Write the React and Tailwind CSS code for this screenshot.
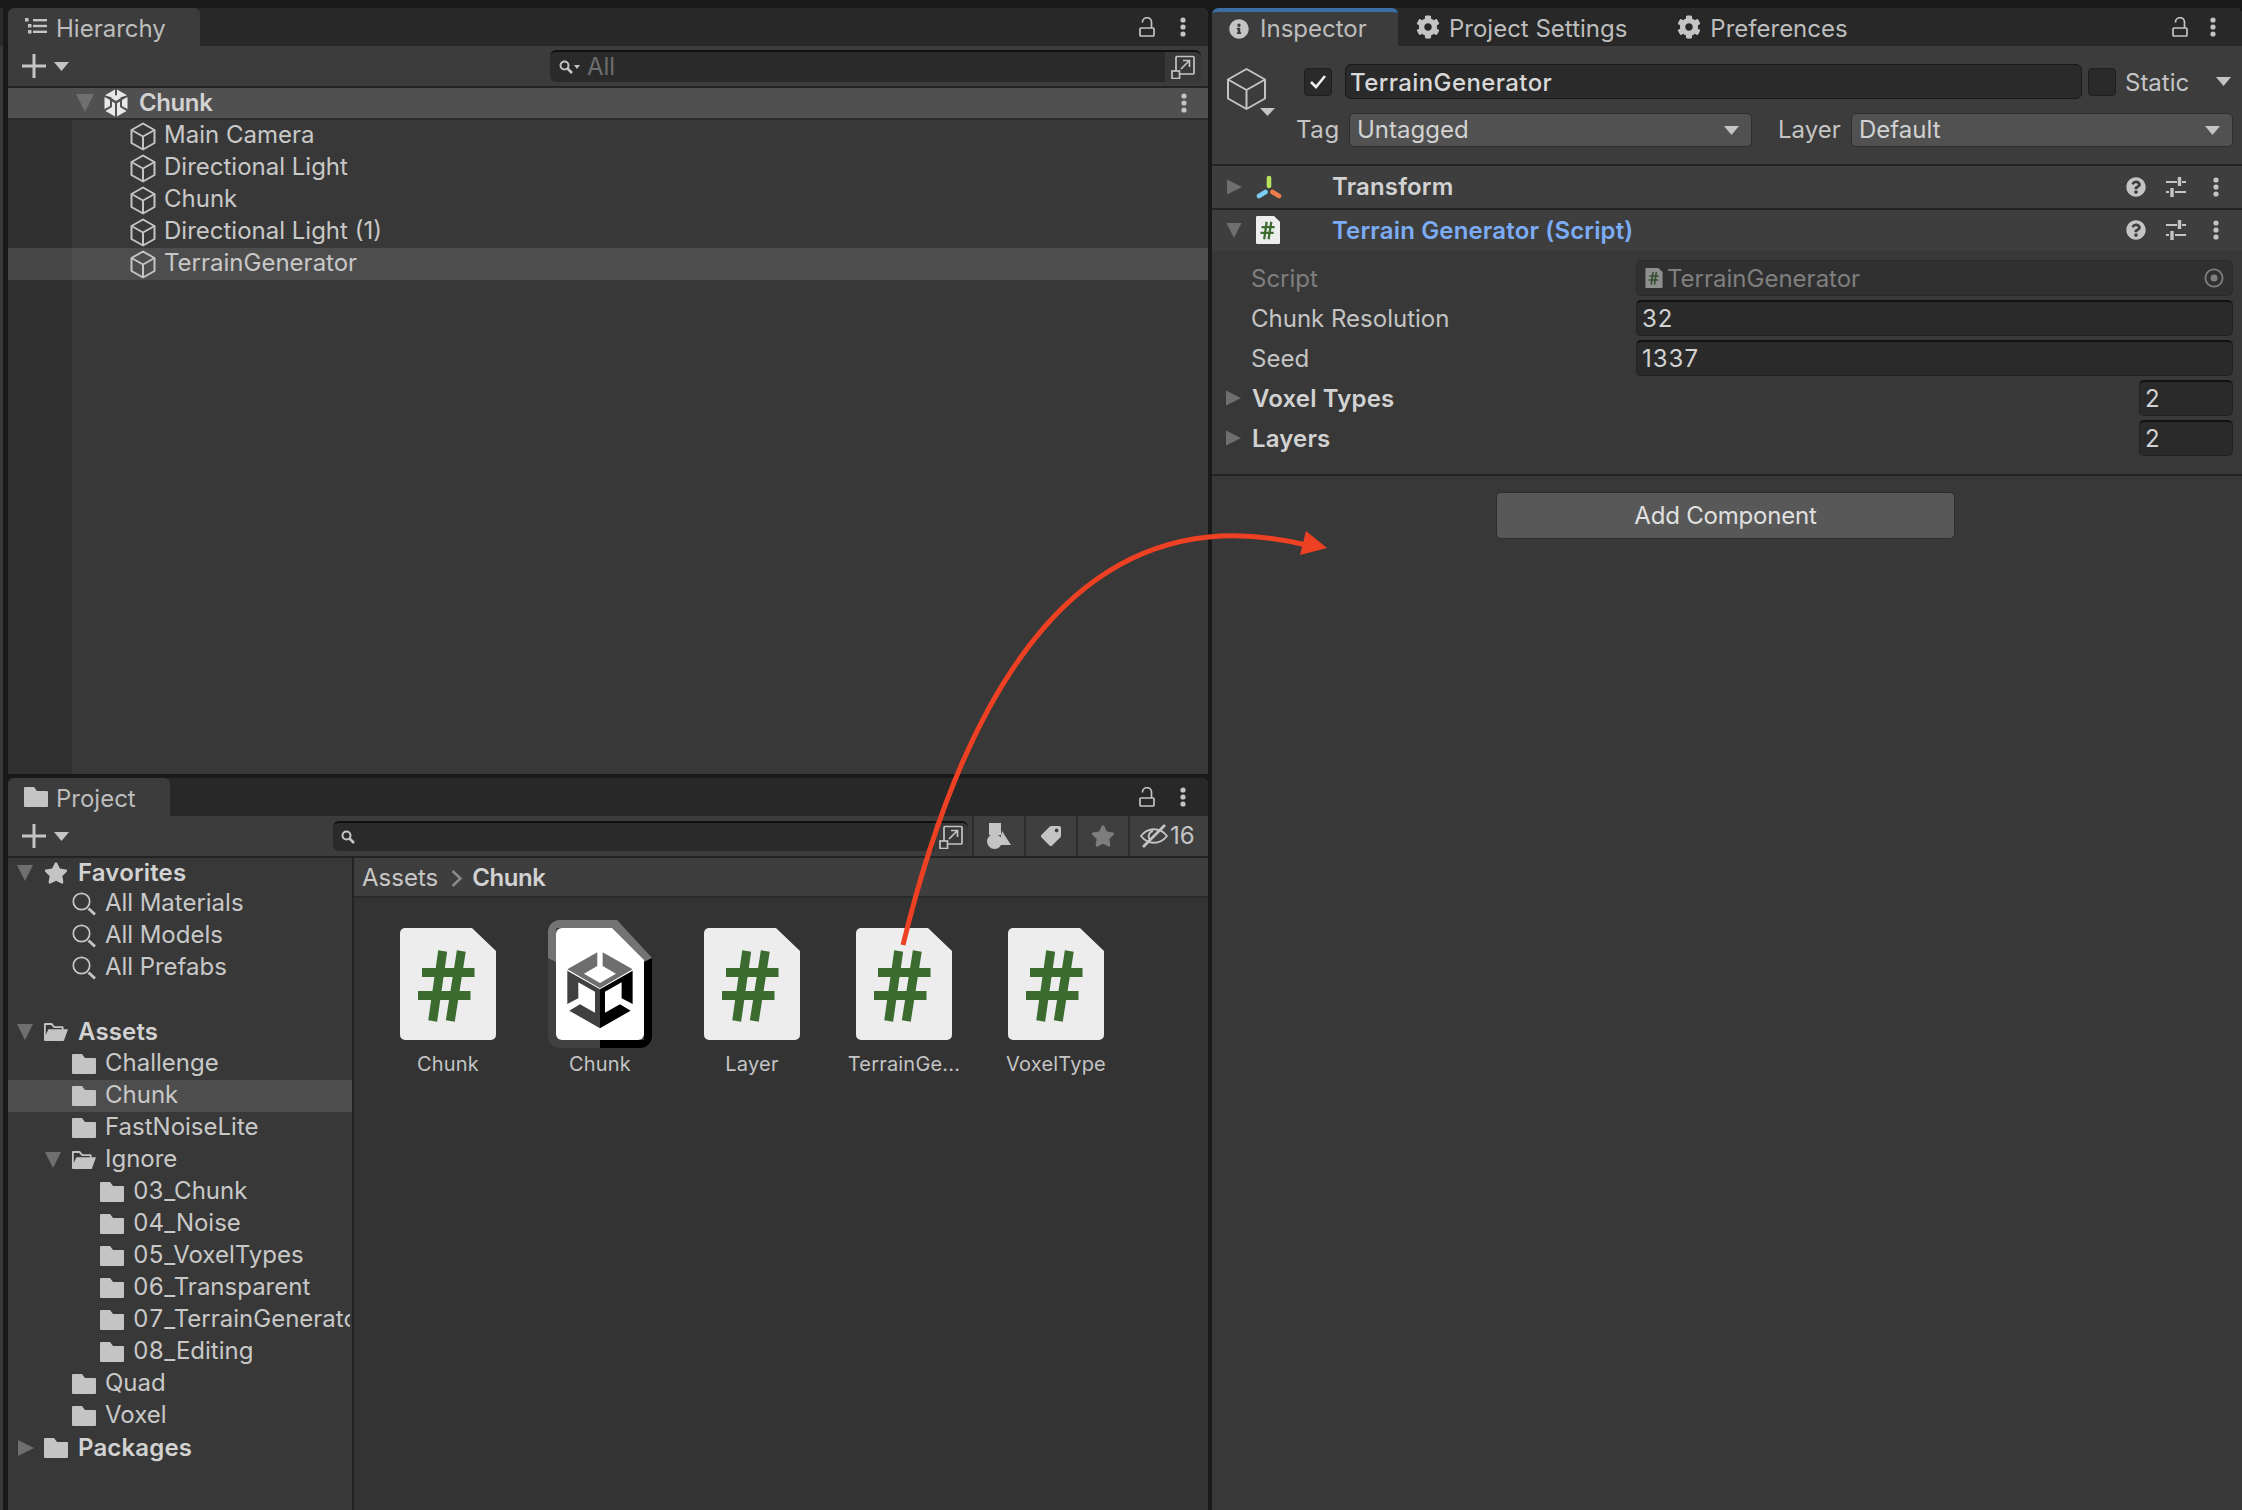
import { FaCog, FaInfoCircle, FaQuestionCircle, FaStar, FaTag } from "react-icons/fa"

const hierarchyRows = ["Main Camera", "Directional Light", "Chunk", "Directional Light (1)", "TerrainGenerator"]

const treeRows = [
  { name: "Favorites", icon: "star", bold: true, arrow: "down", pad: "pl-[8px]" },
  { name: "All Materials", icon: "search", pad: "pl-[36px]" },
  { name: "All Models", icon: "search", pad: "pl-[36px]" },
  { name: "All Prefabs", icon: "search", pad: "pl-[36px]" },
  { name: "", pad: "" },
  { name: "Assets", icon: "open", bold: true, arrow: "down", pad: "pl-[8px]" },
  { name: "Challenge", icon: "folder", pad: "pl-[36px]" },
  { name: "Chunk", icon: "folder", pad: "pl-[36px]", selected: true },
  { name: "FastNoiseLite", icon: "folder", pad: "pl-[36px]" },
  { name: "Ignore", icon: "open", arrow: "down", pad: "pl-[36px]" },
  { name: "03_Chunk", icon: "folder", pad: "pl-[64px]" },
  { name: "04_Noise", icon: "folder", pad: "pl-[64px]" },
  { name: "05_VoxelTypes", icon: "folder", pad: "pl-[64px]" },
  { name: "06_Transparent", icon: "folder", pad: "pl-[64px]" },
  { name: "07_TerrainGenerator", icon: "folder", pad: "pl-[64px]" },
  { name: "08_Editing", icon: "folder", pad: "pl-[64px]" },
  { name: "Quad", icon: "folder", pad: "pl-[36px]" },
  { name: "Voxel", icon: "folder", pad: "pl-[36px]" },
  { name: "Packages", icon: "folder", bold: true, arrow: "right", pad: "pl-[8px]" },
]

const assets = [
  { name: "Chunk", type: "script" },
  { name: "Chunk", type: "prefab" },
  { name: "Layer", type: "script" },
  { name: "TerrainGe...", type: "script" },
  { name: "VoxelType", type: "script" },
]

function TriDown({ className = "", color = "#6f6f6f" }) {
  return (
    <svg viewBox="0 0 18 18" className={className}>
      <path d="M0 0H18L9 18Z" fill={color} />
    </svg>
  )
}

function TriRight({ className = "" }) {
  return (
    <svg viewBox="0 0 18 18" className={className}>
      <path d="M0 0L18 9L0 18Z" fill="#6f6f6f" />
    </svg>
  )
}

function MiniArrow({ className = "" }) {
  return (
    <svg viewBox="0 0 15 9" className={className}>
      <path d="M0 0H15L7.5 9Z" fill="#c4c4c4" />
    </svg>
  )
}

function Dots({ className = "" }) {
  return (
    <svg viewBox="0 0 6 20" className={`w-[6px] h-[20px] shrink-0 ${className}`}>
      <circle cx="3" cy="3" r="2.6" fill="#c4c4c4" />
      <circle cx="3" cy="10" r="2.6" fill="#c4c4c4" />
      <circle cx="3" cy="17" r="2.6" fill="#c4c4c4" />
    </svg>
  )
}

function Lock({ className = "" }) {
  return (
    <svg viewBox="0 0 16 20" className={`w-[16px] h-[20px] shrink-0 ${className}`} fill="none" stroke="#c4c4c4" strokeWidth="1.7">
      <rect x="1" y="11" width="14" height="8" rx="1" />
      <path d="M3.5 5.5A4.5 4.5 0 0 1 12.5 4.8V11" />
    </svg>
  )
}

function Plus() {
  return (
    <svg viewBox="0 0 24 24" className="w-[24px] h-[24px] shrink-0">
      <path d="M10.5 0h3v10.5H24v3H13.5V24h-3V13.5H0v-3h10.5Z" fill="#c4c4c4" />
    </svg>
  )
}

function Cube({ className = "", stroke = "#c4c4c4", width = 2 }) {
  return (
    <svg viewBox="0 0 26 29" className={className} fill="none" stroke={stroke} strokeWidth={width} strokeLinejoin="round">
      <path d="M13 1.5L24.5 8V21L13 27.5L1.5 21V8Z" />
      <path d="M1.5 8L13 14.5L24.5 8M13 14.5V27.5" />
    </svg>
  )
}

function UnityMark({ className = "" }) {
  return (
    <svg viewBox="0 0 24 28" className={className}>
      <path d="M11 0.5L1 6.2L11 9.4ZM13 0.5L23 6.2L13 9.4ZM0.5 8L6 11V17L0.5 20ZM23.5 8L18 11V17L23.5 20Z" fill="#e8e8e8" />
      <path d="M8 12.5L11 14.2V27.5L1.5 22L8 18ZM16 12.5L13 14.2V27.5L22.5 22L16 18Z" fill="#e8e8e8" />
      <path d="M12 6L17 9L12 12L7 9Z" fill="#e8e8e8" />
    </svg>
  )
}

function Folder({ className = "" }) {
  return (
    <svg viewBox="0 0 24 20" className={className}>
      <path d="M1 0H10L13 4H23a1 1 0 0 1 1 1V19a1 1 0 0 1-1 1H1a1 1 0 0 1-1-1V1a1 1 0 0 1 1-1Z" fill="#c4c4c4" />
    </svg>
  )
}

function FolderOpen({ className = "" }) {
  return (
    <svg viewBox="0 0 27 20" className={className}>
      <path d="M1 0H9L12 3.5H21a1 1 0 0 1 1 1V7H20V5.5H11L8 2H2V13L5 7H27L22.5 19.5a1 1 0 0 1-1 .5H1a1 1 0 0 1-1-1V1a1 1 0 0 1 1-1Z" fill="#c4c4c4" />
    </svg>
  )
}

function SearchRing({ className = "" }) {
  return (
    <svg viewBox="0 0 24 24" className={className} fill="none" stroke="#c4c4c4">
      <circle cx="9.5" cy="9.5" r="8.2" strokeWidth="1.8" />
      <path d="M16.5 16.5L23 22.5" strokeWidth="3" />
    </svg>
  )
}

function SmallSearch({ className = "" }) {
  return (
    <svg viewBox="0 0 14 14" className={className} fill="none" stroke="#c4c4c4">
      <circle cx="5.5" cy="5.5" r="4" strokeWidth="2" />
      <path d="M8.5 8.5L13 13" strokeWidth="2.6" />
    </svg>
  )
}

function Expand({ className = "" }) {
  return (
    <svg viewBox="0 0 24 24" className={`w-[24px] h-[24px] shrink-0 ${className}`} fill="none" stroke="#c4c4c4" strokeWidth="1.7">
      <path d="M5 16V2.5a1 1 0 0 1 1-1H22a1 1 0 0 1 1 1V18a1 1 0 0 1-1 1H9" />
      <rect x="1" y="16" width="7.5" height="7.5" />
      <path d="M10 14L18 6M12 5.5H18.5V12" />
    </svg>
  )
}

function Sliders() {
  return (
    <svg viewBox="0 0 20 20" className="w-[20px] h-[20px] shrink-0" fill="none" stroke="#c4c4c4" strokeWidth="1.8">
      <path d="M0 5H11M16 5H20M0 15H3M9 15H20" />
      <path d="M13.5 0V9M6 11V20" strokeWidth="3.4" />
    </svg>
  )
}

function TransformIcon() {
  return (
    <svg viewBox="0 0 26 24" className="w-[26px] h-[24px] shrink-0" fill="none" strokeWidth="4.6" strokeLinecap="round">
      <path d="M13 3V11" stroke="#b6e25c" />
      <path d="M3 21L9.5 17" stroke="#7ccdf4" />
      <path d="M23 21L16.5 17" stroke="#ee7b4c" />
    </svg>
  )
}

function ScriptFile({ className = "" }) {
  return (
    <svg viewBox="0 0 96 112" className={className}>
      <path d="M5 0H72L96 23V107a5 5 0 0 1-5 5H5a5 5 0 0 1-5-5V5a5 5 0 0 1 5-5Z" fill="#ededed" />
      <path d="M42.7 23L32.7 93M61.3 23L50.3 93M22 44.5H74.5M18 67.5H70.5" fill="none" stroke="#3b6b2f" strokeWidth="9" />
    </svg>
  )
}

function PrefabFile() {
  return (
    <svg viewBox="0 0 104 128" className="w-[104px] h-[128px] shrink-0 -mt-2 -mx-1">
      <path d="M12 0H69L104 38V116a12 12 0 0 1-12 12H12a12 12 0 0 1-12-12V12A12 12 0 0 1 12 0Z" fill="#404040" />
      <path d="M12 0H69L104 38L96 42L64 8H8V42L0 38V12A12 12 0 0 1 12 0Z" fill="#737373" />
      <path d="M52 120H96V42L104 38V116a12 12 0 0 1-12 12H52Z" fill="#000" />
      <path d="M14 8H64L96 40V114a6 6 0 0 1-6 6H14a6 6 0 0 1-6-6V14a6 6 0 0 1 6-6Z" fill="#fff" />
      <g transform="translate(-188 -40) scale(0.3333)">
        <path d="M712 217L622 268L720 325L818 268L728 217V258L768 281L720 309L672 281L712 258Z" fill="#6e6e6e" />
        <path d="M622 272L720 328V445L628 392L660 373L705 398V335L655 307V355L622 372Z" fill="#404040" />
        <path d="M818 272L720 328V445L812 392L780 373L735 398V335L785 307V355L818 372Z" fill="#000" />
      </g>
    </svg>
  )
}

function ShapesIcon() {
  return (
    <svg viewBox="0 0 24 26" className="w-[24px] h-[26px] shrink-0" fill="#c4c4c4">
      <rect x="2" y="0" width="12" height="12" />
      <path d="M15 8L24 22H12Z" />
      <circle cx="7.5" cy="18.5" r="7.5" />
    </svg>
  )
}

function EyeOff() {
  return (
    <svg viewBox="0 0 28 24" className="w-[28px] h-[24px] shrink-0" fill="none" stroke="#c4c4c4" strokeWidth="1.8">
      <path d="M1 12C8 3 20 3 27 12C20 21 8 21 1 12Z" />
      <path d="M13 7a5.5 5.5 0 0 0-3 9" strokeWidth="1.8" />
      <path d="M3 23L25 1" strokeWidth="2.6" />
    </svg>
  )
}

function Tab({ icon, label, className = "", textClass = "pt-[3px]" }) {
  return (
    <div className={`flex items-center h-full ${className}`}>
      {icon}
      <span className={`text-[#bdbdbd] ${textClass}`}>{label}</span>
    </div>
  )
}

function Dropdown({ label, className = "" }) {
  return (
    <div className={`flex items-center justify-between h-[34px] rounded-[5px] bg-[#515151] border border-[#2e2e2e] pl-[7px] pr-[12px] text-[#d2d2d2] ${className}`}>
      <span>{label}</span>
      <MiniArrow className="w-[15px] h-[9px]" />
    </div>
  )
}

function ComponentHeader({ arrow, icon, label, labelColor, className = "" }) {
  return (
    <div className={`flex items-center bg-[#3e3e3e] pl-[15px] pr-[23px] ${className}`}>
      {arrow}
      <div className="w-[90px] pl-[14px] flex items-center">{icon}</div>
      <span className={`font-semibold tracking-[0.15px] ${labelColor}`}>{label}</span>
      <FaQuestionCircle className="ml-auto w-[20px] h-[20px] text-[#c4c4c4]" />
      <div className="ml-[20px]"><Sliders /></div>
      <Dots className="ml-[27px]" />
    </div>
  )
}

function Field({ value, className = "" }) {
  return (
    <div className={`h-[36px] flex items-center rounded-[5px] bg-[#2a2a2a] border border-[#212121] border-t-2 border-t-[#111111] pl-[5px] tracking-[1px] text-[#d2d2d2] ${className}`}>
      <span>{value}</span>
    </div>
  )
}

function Hierarchy() {
  return (
    <div className="h-[766px] flex flex-col rounded-t-md overflow-hidden bg-[#383838]">
      <div className="h-[38px] shrink-0 flex bg-[#282828]">
        <Tab
          className="w-[192px] bg-[#3c3c3c] rounded-t-md pl-[17px]"
          icon={
            <svg viewBox="0 0 22 16" className="w-[22px] h-[16px] mr-[9px] -mt-[2px]" fill="#c4c4c4">
              <rect x="0" y="0" width="3.5" height="3.5" />
              <rect x="3" y="6" width="3.5" height="3.5" />
              <rect x="3" y="12" width="3.5" height="3.5" />
              <rect x="8" y="1" width="14" height="2.4" />
              <rect x="8" y="6.8" width="14" height="2.4" />
              <rect x="8" y="12.6" width="14" height="2.4" />
            </svg>
          }
          label="Hierarchy"
        />
        <Lock className="ml-auto self-center" />
        <Dots className="ml-[25px] mr-[22px] self-center" />
      </div>
      <div className="h-[40px] shrink-0 flex items-center bg-[#3c3c3c] pl-[14px] pr-[7px]">
        <Plus />
        <MiniArrow className="w-[15px] h-[9px] ml-[8px]" />
        <div className="ml-[481px] flex-1 h-[32px] flex items-center rounded-md bg-[#2a2a2a] border-t-2 border-[#111111] pl-[9px]">
          <SmallSearch className="w-[14px] h-[14px]" />
          <div className="border-t-[4px] border-x-[3px] border-t-[#c4c4c4] border-x-transparent ml-[1px]" />
          <span className="ml-[7px] text-[#6d6d6d]">All</span>
          <div className="ml-auto h-full w-[36px] flex items-center justify-center bg-[#383838] rounded-r-md">
            <Expand />
          </div>
        </div>
      </div>
      <div className="h-[2px] shrink-0 bg-[#232323]" />
      <div className="h-[30px] shrink-0 flex items-center bg-[#505050] pl-[68px] pr-[21px]">
        <TriDown className="w-[18px] h-[18px]" />
        <UnityMark className="w-[24px] h-[28px] ml-[10px]" />
        <span className="ml-[11px] font-semibold tracking-[-0.4px] text-[#d2d2d2]">Chunk</span>
        <Dots className="ml-auto" />
      </div>
      <div className="h-[2px] shrink-0 bg-[#2c2c2c]" />
      {hierarchyRows.map((name, i) => {
        const selected = i === hierarchyRows.length - 1
        return (
          <div key={name} className={`h-[32px] shrink-0 flex items-center ${selected ? "bg-[#4d4d4d]" : ""}`}>
            <div className={`w-[64px] h-full ${selected ? "bg-[#474747]" : "bg-[#303030]"}`} />
            <Cube className="w-[26px] h-[29px] ml-[58px]" />
            <span className="ml-[8px] pb-[2px] text-[#c8c8c8]">{name}</span>
          </div>
        )
      })}
      <div className="flex-1 w-[64px] bg-[#303030]" />
    </div>
  )
}

function TreeRow({ row }) {
  return (
    <div className={`h-[32px] shrink-0 first:h-[30px] ${row.selected ? "bg-[#4d4d4d]" : ""}`}>
      <div className={`h-full mr-[2px] flex items-center whitespace-nowrap overflow-hidden ${row.pad}`}>
        {row.name && (
          <>
            <div className="w-[18px] shrink-0 mr-[10px]">
              {row.arrow === "down" && <TriDown className="w-[18px] h-[16px]" />}
              {row.arrow === "right" && <TriRight className="w-[16px] h-[18px] ml-[2px]" />}
            </div>
            <div className="w-[24px] shrink-0 flex items-center mr-[9px]">
              {row.icon === "star" && <FaStar className="w-[24px] h-[24px] text-[#c4c4c4]" />}
              {row.icon === "search" && <SearchRing className="w-[24px] h-[24px]" />}
              {row.icon === "folder" && <Folder className="w-[24px] h-[20px]" />}
              {row.icon === "open" && <FolderOpen className="w-[27px] h-[20px] max-w-none" />}
            </div>
            <span className={row.bold ? "ml-[1px] font-semibold tracking-[0.15px] text-[#d2d2d2]" : "pb-[2px] tabular-nums text-[#c8c8c8]"}>{row.name}</span>
          </>
        )}
      </div>
    </div>
  )
}

function Project() {
  return (
    <div className="flex-1 flex flex-col rounded-t-md overflow-hidden bg-[#383838]">
      <div className="h-[38px] shrink-0 flex bg-[#282828]">
        <Tab
          className="w-[162px] bg-[#3c3c3c] rounded-t-md pl-[16px]"
          icon={<Folder className="w-[24px] h-[20px] mr-[8px]" />}
          label="Project"
        />
        <Lock className="ml-auto self-center" />
        <Dots className="ml-[25px] mr-[22px] self-center" />
      </div>
      <div className="h-[40px] shrink-0 flex items-center bg-[#3c3c3c] pl-[14px]">
        <Plus />
        <MiniArrow className="w-[15px] h-[9px] ml-[8px]" />
        <div className="ml-[264px] w-[635px] h-[30px] flex items-center rounded-md bg-[#2a2a2a] border-t-2 border-[#111111] pl-[8px]">
          <SmallSearch className="w-[14px] h-[14px]" />
          <div className="ml-auto h-full w-[34px] flex items-center justify-center bg-[#383838] rounded-r-md">
            <Expand />
          </div>
        </div>
        <div className="ml-[4px] h-full w-[52px] flex items-center justify-center border-l-2 border-[#2c2c2c] bg-[#3f3f3f]">
          <ShapesIcon />
        </div>
        <div className="h-full w-[52px] flex items-center justify-center border-l-2 border-[#2c2c2c] bg-[#3f3f3f]">
          <FaTag className="w-[20px] h-[20px] text-[#c4c4c4] scale-x-[-1]" />
        </div>
        <div className="h-full w-[52px] flex items-center justify-center border-l-2 border-[#2c2c2c] bg-[#3f3f3f]">
          <FaStar className="w-[24px] h-[24px] text-[#7d7d7d]" />
        </div>
        <div className="h-full flex-1 flex items-center pl-[10px] border-l-2 border-[#2c2c2c] bg-[#3f3f3f] text-[#c4c4c4]">
          <EyeOff />
          <span className="ml-[2px]">16</span>
        </div>
      </div>
      <div className="flex-1 flex border-t-2 border-[#232323] min-h-0">
        <div className="w-[344px] shrink-0 flex flex-col">
          {treeRows.map((row, i) => (
            <TreeRow key={i} row={row} />
          ))}
        </div>
        <div className="w-[2px] bg-[#232323]" />
        <div className="flex-1 flex flex-col bg-[#333333]">
          <div className="h-[40px] shrink-0 flex items-center bg-[#3e3e3e] border-b-2 border-[#2a2a2a] pl-[8px] pt-[2px] text-[#c8c8c8]">
            <span>Assets</span>
            <svg viewBox="0 0 11 17" className="w-[11px] h-[17px] ml-[13px]" fill="none" stroke="#8a8a8a" strokeWidth="2.5">
              <path d="M1.5 1L9.5 8.5L1.5 16" />
            </svg>
            <span className="ml-[10px] font-semibold tracking-[-0.4px] text-[#d2d2d2]">Chunk</span>
          </div>
          <div className="flex pl-[18px] pt-[30px]">
            {assets.map((asset, i) => (
              <div key={i} className="w-[152px] flex flex-col items-center">
                <div className="h-[112px] flex justify-center">
                  {asset.type === "script" ? <ScriptFile className="w-[96px] h-[112px]" /> : <PrefabFile />}
                </div>
                <span className="mt-[12px] text-[20px] leading-[24px] tracking-[0.2px] text-[#c4c4c4]">{asset.name}</span>
              </div>
            ))}
          </div>
        </div>
      </div>
    </div>
  )
}

function Inspector() {
  return (
    <div className="w-[1030px] shrink-0 flex flex-col rounded-t-md overflow-hidden bg-[#383838]">
      <div className="h-[38px] shrink-0 flex bg-[#282828]">
        <Tab
          className="w-[186px] bg-[#3c3c3c] border-t-[4px] border-[#3a6ea5] rounded-t-md pl-[17px]"
          icon={<FaInfoCircle className="w-[20px] h-[20px] text-[#c4c4c4] mr-[11px]" />}
          label="Inspector"
          textClass=""
        />
        <Tab
          className="ml-[18px]"
          icon={<FaCog className="w-[24px] h-[24px] text-[#c4c4c4] mr-[9px]" />}
          label="Project Settings"
        />
        <Tab
          className="ml-[50px]"
          icon={<FaCog className="w-[24px] h-[24px] text-[#c4c4c4] mr-[9px]" />}
          label="Preferences"
        />
        <Lock className="ml-auto self-center" />
        <Dots className="ml-[22px] mr-[26px] self-center" />
      </div>

      <div className="h-[118px] shrink-0 bg-[#3c3c3c] pt-[18px]">
        <div className="h-[35px] flex items-center pl-[15px]">
          <div className="w-[77px] h-full shrink-0 self-start">
            <svg viewBox="0 0 48 48" className="w-[48px] h-[48px] mt-[4px]" fill="none" stroke="#c4c4c4" strokeWidth="2" strokeLinejoin="round">
              <path d="M19.5 1L38 11.5V30.5L19.5 41L1 30.5V11.5Z" />
              <path d="M1 11.5L19.5 22L38 11.5M19.5 22V41" />
              <path d="M33 40H48L40.5 48Z" fill="#c4c4c4" stroke="none" />
            </svg>
          </div>
          <div className="w-[28px] h-[28px] shrink-0 flex items-center justify-center rounded-[4px] bg-[#2a2a2a] border border-[#1f1f1f]">
            <svg viewBox="0 0 16 14" className="w-[16px] h-[14px]" fill="none" stroke="#f0f0f0" strokeWidth="2.6">
              <path d="M1 7L6 12L15 1" />
            </svg>
          </div>
          <div className="ml-[13px] w-[737px] h-[35px] shrink-0 flex items-center rounded-md bg-[#2a2a2a] border border-[#191919] pl-[4px] pt-[2px] font-medium tracking-[0.4px] text-[#d8d8d8]">
            TerrainGenerator
          </div>
          <div className="ml-[6px] w-[28px] h-[28px] shrink-0 rounded-[4px] bg-[#2a2a2a] border border-[#1f1f1f]" />
          <span className="ml-[9px] pt-[2px] text-[#c4c4c4]">Static</span>
          <MiniArrow className="w-[15px] h-[9px] ml-[27px]" />
        </div>
        <div className="mt-[14px] h-[34px] flex items-center pl-[84px]">
          <span className="w-[53px] tracking-[0.6px] text-[#c4c4c4]">Tag</span>
          <Dropdown label="Untagged" className="w-[403px]" />
          <span className="ml-[26px] w-[73px] text-[#c4c4c4]">Layer</span>
          <Dropdown label="Default" className="w-[382px]" />
        </div>
      </div>
      <div className="h-[2px] shrink-0 bg-[#232323]" />

      <ComponentHeader
        className="h-[42px] shrink-0"
        arrow={<TriRight className="w-[15px] h-[18px]" />}
        icon={<TransformIcon />}
        label="Transform"
        labelColor="text-[#d2d2d2]"
      />
      <div className="h-[2px] shrink-0 bg-[#232323]" />
      <ComponentHeader
        className="h-[40px] shrink-0"
        arrow={<TriDown className="w-[18px] h-[15px] -ml-[2px] -mr-[1px]" />}
        icon={<ScriptFile className="w-[24px] h-[28px]" />}
        label={<span className="inline-block pt-[2px]">Terrain Generator (Script)</span>}
        labelColor="text-[#7bacf5]"
      />

      <div className="pt-[10px] pr-[9px] flex flex-col gap-[4px]">
        <div className="flex items-center pl-[39px]">
          <span className="w-[385px] pt-[2px] text-[#7f7f7f]">Script</span>
          <div className="flex-1 h-[36px] flex items-center rounded-[5px] bg-[#303030] border border-[#2a2a2a] pl-[8px] text-[#7f7f7f]">
            <ScriptFile className="w-[18px] h-[20px] opacity-50 mr-[4px]" />
            <span className="pt-[2px]">TerrainGenerator</span>
            <div className="ml-auto w-[36px] h-full flex items-center justify-center">
              <svg viewBox="0 0 20 20" className="w-[20px] h-[20px]" fill="none" stroke="#7f7f7f" strokeWidth="1.8">
                <circle cx="10" cy="10" r="8.6" />
                <circle cx="10" cy="10" r="3.5" fill="#7f7f7f" stroke="none" />
              </svg>
            </div>
          </div>
        </div>
        <div className="flex items-center pl-[39px]">
          <span className="w-[385px] pt-[2px] text-[#c4c4c4]">Chunk Resolution</span>
          <Field value="32" className="flex-1" />
        </div>
        <div className="flex items-center pl-[39px]">
          <span className="w-[385px] pt-[2px] text-[#c4c4c4]">Seed</span>
          <Field value="1337" className="flex-1" />
        </div>
        <div className="flex items-center pl-[14px]">
          <TriRight className="w-[15px] h-[18px] mr-[11px]" />
          <span className="pt-[2px] font-semibold tracking-[0.15px] text-[#d2d2d2]">Voxel Types</span>
          <Field value="2" className="w-[94px] ml-auto" />
        </div>
        <div className="flex items-center pl-[14px]">
          <TriRight className="w-[15px] h-[18px] mr-[11px]" />
          <span className="pt-[2px] font-semibold tracking-[0.15px] text-[#d2d2d2]">Layers</span>
          <Field value="2" className="w-[94px] ml-auto" />
        </div>
      </div>
      <div className="h-[2px] mt-[18px] shrink-0 bg-[#232323]" />
      <div className="mt-[16px] ml-[284px] w-[459px] h-[47px] flex items-center justify-center rounded-[5px] bg-[#585858] border border-[#2e2e2e] tracking-[-0.2px] text-[#e0e0e0]">
        Add Component
      </div>
    </div>
  )
}

export default function App() {
  return (
    <div className="relative w-[2242px] h-[1510px] overflow-hidden bg-[#191919] font-[Inter,sans-serif] text-[24px] leading-[32px] flex flex-col">
      <div className="h-[8px] shrink-0" />
      <div className="flex-1 flex min-h-0">
        <div className="w-[8px] shrink-0">
          <div className="w-[3px] h-full flex flex-col">
            <div className="h-[38px] bg-[#2a2a2a]" />
            <div className="flex-1 bg-[#383838]" />
          </div>
        </div>
        <div className="w-[1200px] shrink-0 flex flex-col gap-[4px]">
          <Hierarchy />
          <Project />
        </div>
        <div className="w-[4px] shrink-0" />
        <Inspector />
      </div>

      {/* red annotation arrow over the panels */}
      <svg viewBox="0 0 2242 1510" className="absolute inset-0 w-[2242px] h-[1510px] pointer-events-none">
        <path d="M903 945C965 690 1080 490 1306 545" fill="none" stroke="#ee4023" strokeWidth="5" />
        <path d="M1327 548L1306 531L1300 555Z" fill="#ee4023" />
      </svg>
    </div>
  )
}
